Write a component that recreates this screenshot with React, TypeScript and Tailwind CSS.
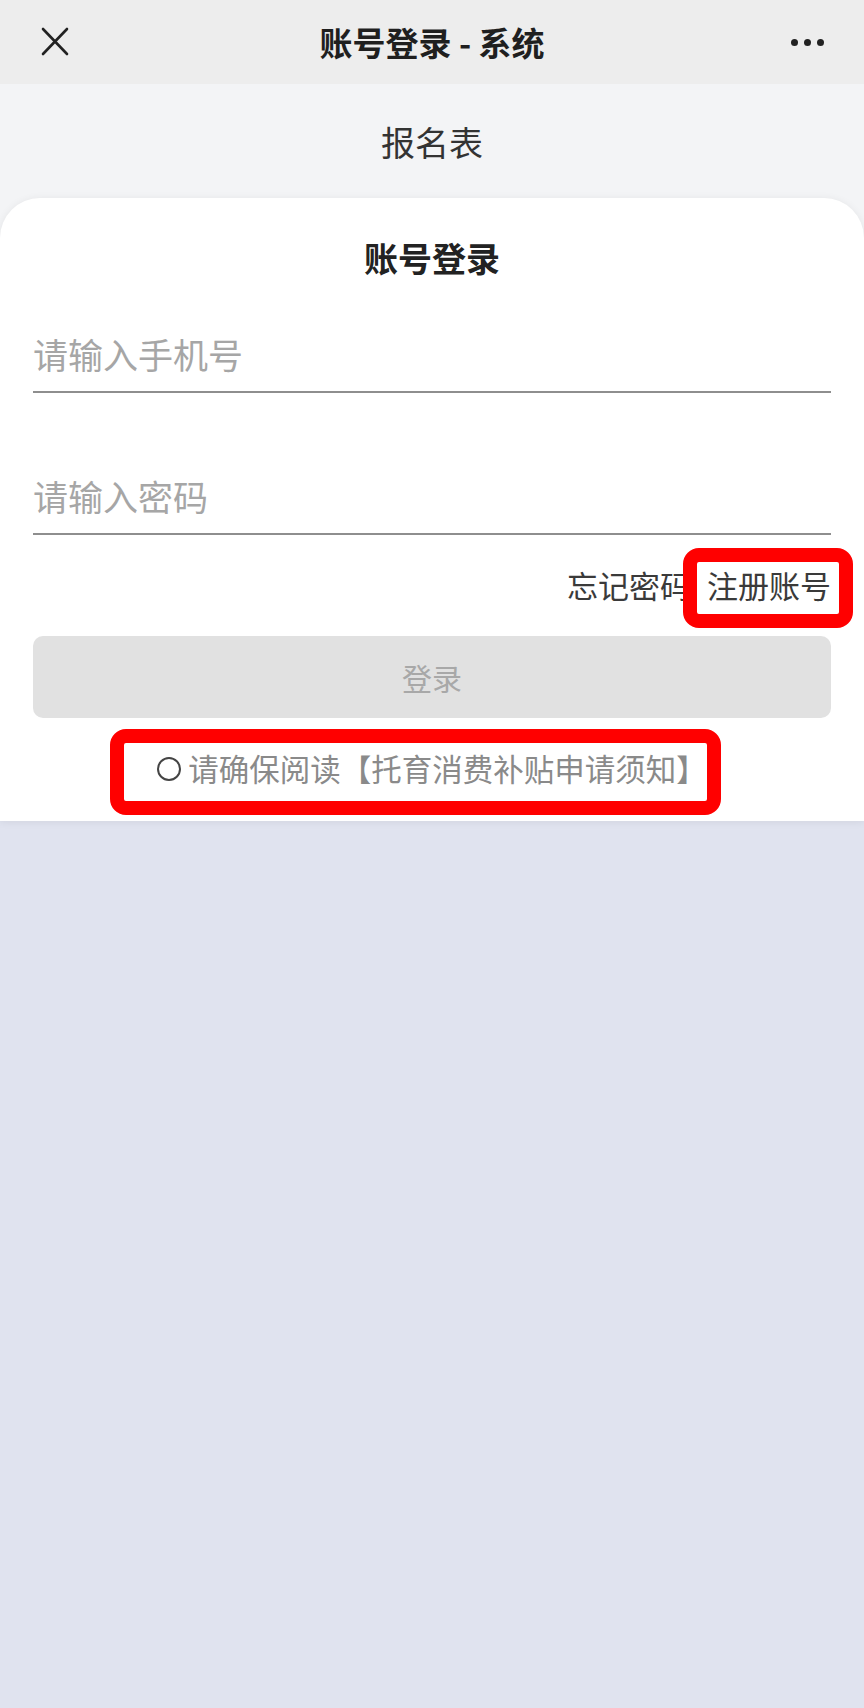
import React from "react";

const CloseIcon = () => (
  <svg width="30" height="30" viewBox="0 0 30 30" fill="none" stroke="#222" strokeWidth={2.6} strokeLinecap="round">
    <path d="M3 2 L27 27 M27 2 L3 27" />
  </svg>
);

const MoreIcon = () => (
  <div className="flex items-center gap-[6px]">
    <span className="w-[7px] h-[7px] rounded-full bg-[#222]" />
    <span className="w-[7px] h-[7px] rounded-full bg-[#222]" />
    <span className="w-[7px] h-[7px] rounded-full bg-[#222]" />
  </div>
);

const Field = ({ placeholder, type, className }: { placeholder: string; type: string; className: string }) => (
  <div className={`h-[72px] flex items-center pb-[4px] border-b-2 border-[#8e8e8e] ${className}`}>
    <input
      type={type}
      placeholder={placeholder}
      className="w-full bg-transparent outline-none text-[35px] leading-[48px] text-[#333] placeholder:text-[#a6a6a6]"
    />
  </div>
);

export default function App() {
  return (
    <div className="min-h-screen w-full flex flex-col bg-[#e0e3ef] font-['Noto_Sans_CJK_SC',sans-serif]">
      {/* top bar */}
      <header className="h-[84px] grid grid-cols-[1fr_auto_1fr] items-center bg-[#ededed] px-[40px]">
        <div className="flex items-center">
          <CloseIcon />
        </div>
        <h1 className="text-[33px] font-bold text-[#1f1f1f] leading-none">账号登录 - 系统</h1>
        <div className="flex justify-end">
          <MoreIcon />
        </div>
      </header>

      <div className="bg-[#f3f4f6]">
        <div className="h-[114px] flex items-center justify-center text-[34px] text-[#333]">报名表</div>

        <div className="relative bg-white rounded-t-[40px] px-[33px] pt-[35px] pb-[32px] shadow-[0_1px_8px_rgba(0,0,0,0.07)]">
          <h2 className="h-[48px] flex items-center justify-center text-[34px] font-bold text-[#222]">账号登录</h2>

          <Field placeholder="请输入手机号" type="tel" className="mt-[40px]" />
          <Field placeholder="请输入密码" type="password" className="mt-[70px]" />

          <div className="mt-[30px] h-[40px] flex items-center justify-end gap-[16px] text-[31px] text-[#3a3a3a]">
            <span>忘记密码</span>
            <span>注册账号</span>
          </div>

          <button className="mt-[31px] w-full h-[82px] rounded-[10px] bg-[#e1e1e1] text-[30px] text-[#a8a8a8]">
            登录
          </button>

          <div className="mt-[31px] h-[40px] flex items-center justify-center gap-[7px] text-[30.5px] text-[#8a8a8a]">
            <span className="w-[24px] h-[24px] rounded-full border-[2.5px] border-[#444]" />
            <span>请确保阅读【托育消费补贴申请须知】</span>
          </div>

          {/* annotation boxes */}
          <div className="absolute left-[683px] top-[350px] w-[170px] h-[80px] border-[14px] border-[#ff0000] rounded-[16px]" />
          <div className="absolute left-[110px] top-[531px] w-[611px] h-[86px] border-[14px] border-[#ff0000] rounded-[16px]" />
        </div>
      </div>

      <div className="flex-1" />
    </div>
  );
}
